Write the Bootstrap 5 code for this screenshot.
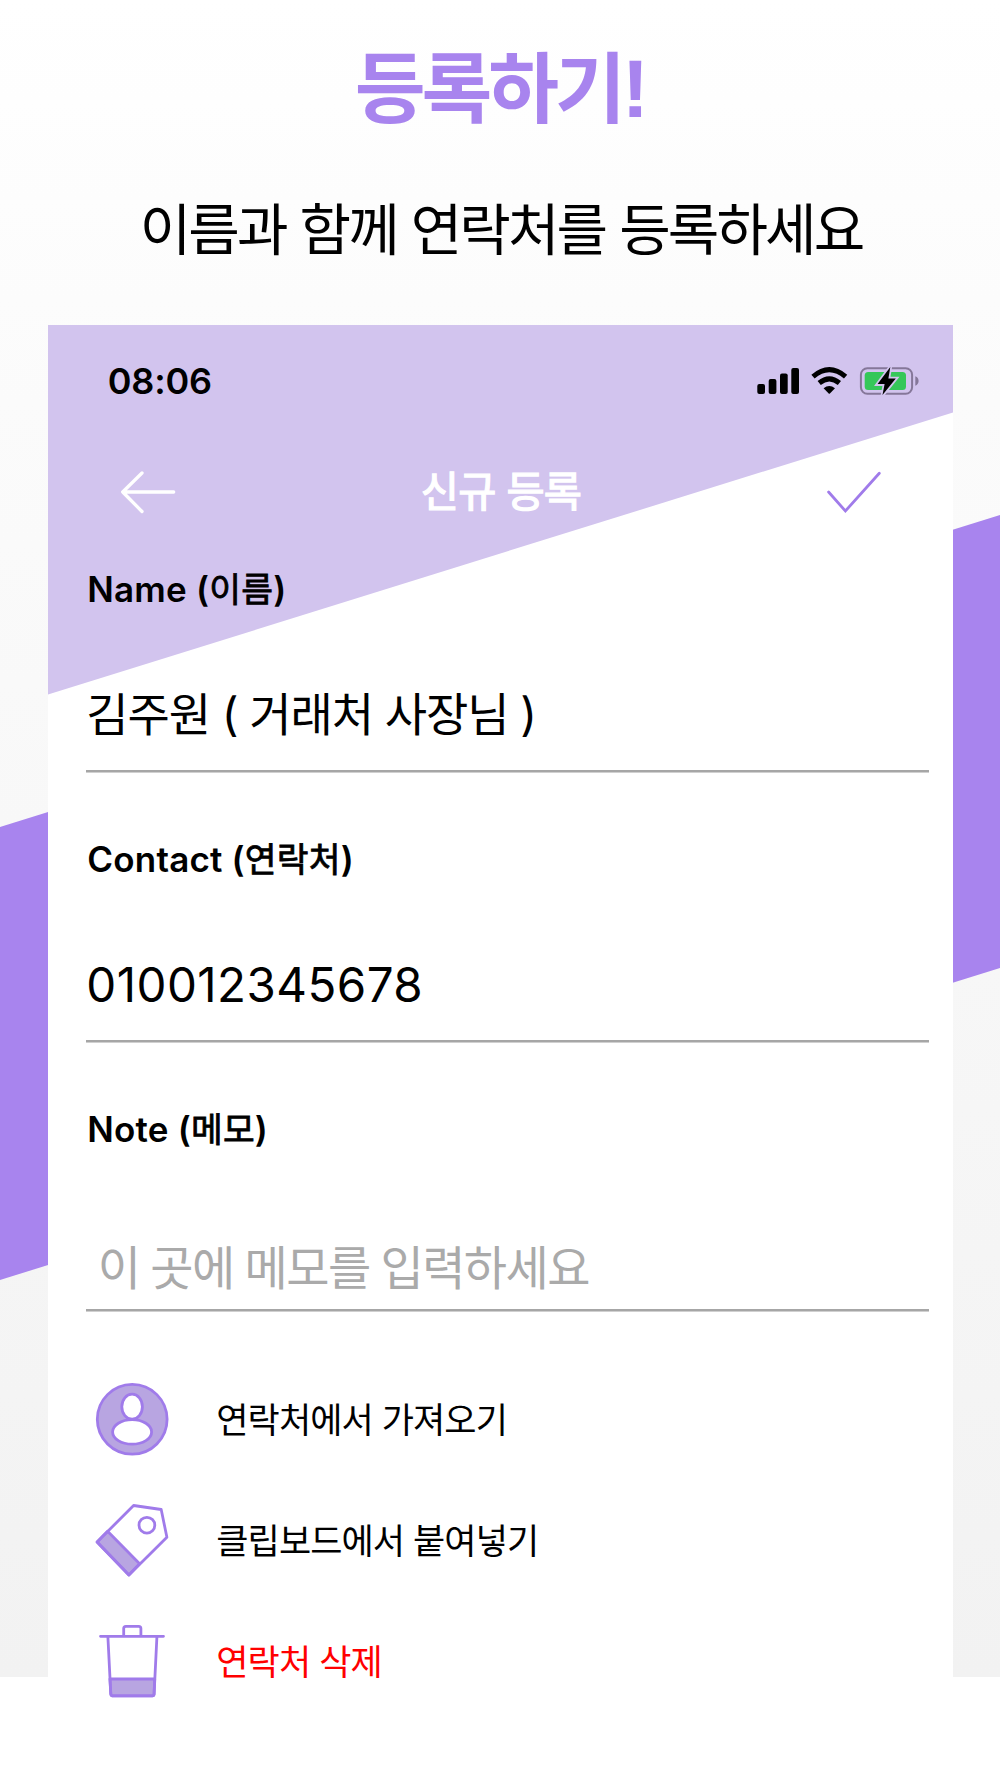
<!DOCTYPE html>
<html lang="ko">
<head>
<meta charset="utf-8">
<meta name="viewport" content="width=device-width, initial-scale=1">
<title>등록하기!</title>
<link href="https://cdn.jsdelivr.net/npm/bootstrap@5.3.0/dist/css/bootstrap.min.css" rel="stylesheet">
<style>
  body { margin: 0; background: #fff; color: #000; font-family: Inter, "Noto Sans CJK KR", sans-serif; }
  .stage { width: 1000px; height: 1778px; background: linear-gradient(#fff 0, #fbfbfb 400px, #f2f2f2 1677px, #fff 1677px); }
  .ribbon { left: 0; top: 0; z-index: 0; }
  .hero { padding-top: 34px; height: 325px; font-family: "Noto Sans CJK KR", sans-serif; }
  .hero h1 { height: 100px; padding-left: 4px; font-size: 77px; line-height: 100px; font-weight: 700; letter-spacing: -4.1px; color: #a884ee; }
  .hero .bang { font-family: "Liberation Sans", sans-serif; font-size: 82px; line-height: 1; letter-spacing: 0; }
  .hero p { padding-left: 2px; font-size: 56px; line-height: 80px; margin-top: 52px; letter-spacing: -2.9px; word-spacing: 1.2px; }
  .phone { width: 905.4px; margin-left: 47.8px; height: 1453px; background: #fff; }
  .slant { left: 0; top: 0; }
  .status { height: 112px; padding: 0 33px 0 60px; font-size: 36px; font-weight: 600; letter-spacing: -.2px; }
  .navrow { height: 110px; padding: 0 72px 0 72px; }
  .navrow h2 { font-size: 41.5px; font-weight: 400; line-height: 110px; letter-spacing: -.8px; -webkit-text-stroke: 1.3px #fff; }
  .entry { padding: 0 24px 0 38.5px; }
  .entry label { height: 84px; font-size: 35px; font-weight: 600; line-height: 84px; padding-left: 1px; letter-spacing: .2px; }
  .entry label span { font-weight: 400; font-size: 34.5px; line-height: 1; -webkit-text-stroke: .8px #000; }
  .entry .form-control { height: 115.5px; margin-top: 26px; padding: 0 0 8px 0; border: 0; border-radius: 0; background: linear-gradient(to top, #d0d0d0 1px, #a6a6a6 1px 3px, transparent 3px); font-size: 46px; color: #000; letter-spacing: -1.1px; box-shadow: none; }
  .entry + .entry { padding-top: 44.5px; }
  .entry .digits { font-size: 47.5px; letter-spacing: .45px; padding-bottom: 0; }
  .entry .memo { height: 87.5px; margin-top: 53px; padding: 0 0 1px 11.5px; font-size: 47px; letter-spacing: -1.5px; word-spacing: -1px; }
  .memo::placeholder { color: #aaa; opacity: 1; }
  .actions { padding: 47px 0 0 42px; }
  .action { height: 121px; gap: 40.5px; font-size: 35px; line-height: 50px; letter-spacing: -.9px; }
  .action span { padding-top: 2px; }
  .action-del { color: #f00; }
  .ico { fill: none; stroke: #a07bea; stroke-width: 2.8; }
</style>
</head>
<body>
<main class="stage position-relative overflow-hidden">
  <svg class="ribbon position-absolute" width="1000" height="1778" aria-hidden="true"><path d="M0 827L1000 515V968L0 1280z" fill="#a884ee"/></svg>

  <header class="hero position-relative text-center">
    <h1 class="m-0">등록하기<span class="bang">!</span></h1>
    <p class="mb-0">이름과 함께 연락처를 등록하세요</p>
  </header>

  <section class="phone position-relative">
    <svg class="slant position-absolute" width="905.4" height="370" aria-hidden="true"><path d="M0 0H905.4V87.3L0 369.5z" fill="#d2c4ee"/></svg>

    <div class="status position-relative d-flex align-items-center justify-content-between">
      <span>08:06</span>
      <svg width="164" height="32" viewBox="756 365 164 32" aria-hidden="true">
        <g><rect x="757.3" y="384" width="7.7" height="10" rx="2"/><rect x="768.7" y="379" width="7.7" height="15" rx="2"/><rect x="780" y="373.6" width="7.7" height="20.4" rx="2"/><rect x="791.3" y="368" width="7.7" height="26" rx="2"/></g>
        <g fill="none" stroke="#000" stroke-width="5"><path d="M813 376.6Q829.3 362.6 845.6 376.6"/><path d="M819.2 383Q829.3 374.6 839.4 383"/></g>
        <path d="M823.6 388.3Q829.3 383.6 835 388.3L829.9 393.5Q829.3 394 828.7 393.5z"/>
        <rect x="860.9" y="368.2" width="51.2" height="25.6" rx="6.5" fill="none" stroke="#857799" stroke-width="2"/>
        <path d="M915.3 376.3Q918.6 377.6 918.6 381T915.3 385.7z" fill="#857799"/>
        <rect x="864.7" y="371.9" width="41.3" height="18.2" rx="3.5" fill="#35c759"/>
        <path d="M890.3 367L877.6 384.1H884.6L882.5 395L895.8 378.5H888.4z" fill="#000" stroke="#d2c4ee" stroke-width="3.6" paint-order="stroke"/>
      </svg>
    </div>

    <nav class="navrow position-relative d-flex align-items-center justify-content-between">
      <svg width="56" height="44" viewBox="120.3 470 56 44" fill="none" stroke="#fff" stroke-width="3.3" stroke-linecap="round" stroke-linejoin="round" aria-label="뒤로"><path d="M174 492H123M142.3 473L123 492L142.3 511.5"/></svg>
      <h2 class="m-0 text-white">신규 등록</h2>
      <svg width="55" height="44" viewBox="826 470 55 44" fill="none" stroke="#a07bea" stroke-width="2.8" stroke-linecap="round" aria-label="저장"><path d="M828.6 492L845.4 511L879.3 473.3"/></svg>
    </nav>

    <form class="position-relative">
      <div class="entry">
        <label class="d-block" for="name">Name (<span>이름</span>)</label>
        <input id="name" class="form-control" value="김주원 ( 거래처 사장님 )">
      </div>
      <div class="entry">
        <label class="d-block" for="contact">Contact (<span>연락처</span>)</label>
        <input id="contact" class="form-control digits" value="010012345678">
      </div>
      <div class="entry">
        <label class="d-block" for="note">Note (<span>메모</span>)</label>
        <input id="note" class="form-control memo" placeholder="이 곳에 메모를 입력하세요">
      </div>
    </form>

    <div class="actions">
      <div class="action d-flex align-items-center">
        <svg class="ico" width="86" height="86" viewBox="90.1 1376 86 86" aria-hidden="true"><circle cx="132.3" cy="1419.3" r="34.9" fill="#b8a5e1"/><ellipse cx="132.2" cy="1406.7" rx="10.3" ry="12.5" fill="#fff"/><ellipse cx="132.2" cy="1431.9" rx="19.5" ry="12.3" fill="#fff"/></svg>
        <span>연락처에서 가져오기</span>
      </div>
      <div class="action d-flex align-items-center">
        <svg class="ico" width="86" height="86" viewBox="90.1 1497 86 86" stroke-linejoin="round" aria-hidden="true"><path d="M107.7 1531.3L139.7 1563.7L129 1575L97.2 1542z" fill="#b8a5e1"/><path d="M133.7 1505.5L161.3 1509.5L167 1537.3L129 1575L97.2 1542z"/><circle cx="147" cy="1525.2" r="7.9"/></svg>
        <span>클립보드에서 붙여넣기</span>
      </div>
      <div class="action d-flex align-items-center">
        <svg class="ico" width="86" height="86" viewBox="90.1 1618 86 86" stroke-linecap="round" stroke-linejoin="round" aria-hidden="true"><path d="M110 1679H154.8L154.2 1694Q154 1695.8 152.5 1695.8H112.5Q111 1695.8 110.9 1694z" fill="#b8a5e1"/><path d="M100.6 1636.3H163.6M108 1637L110.9 1694Q111 1695.8 112.5 1695.8H152.5Q154 1695.8 154.2 1694L157 1637M123.8 1635.5V1628.5Q123.8 1626.3 126 1626.3H138.8Q141 1626.3 141 1628.5V1635.5"/></svg>
        <span class="action-del">연락처 삭제</span>
      </div>
    </div>
  </section>
</main>
<script src="https://cdn.jsdelivr.net/npm/bootstrap@5.3.0/dist/js/bootstrap.bundle.min.js"></script>
</body>
</html>
